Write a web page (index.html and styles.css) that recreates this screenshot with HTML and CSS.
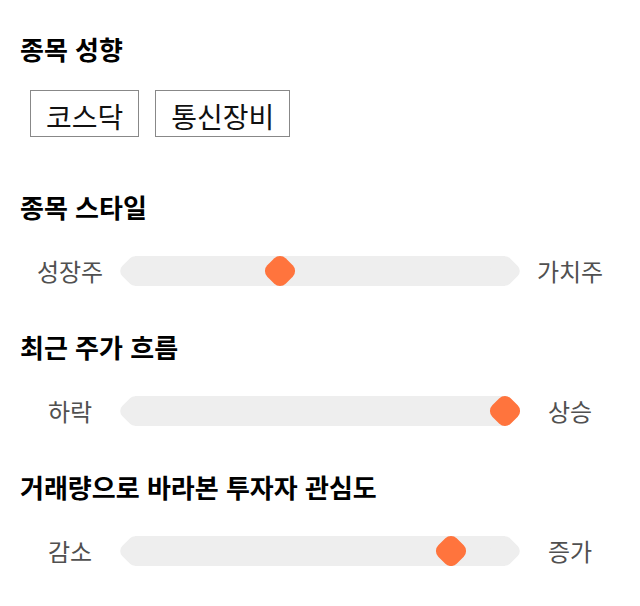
FILE: index.html
```html
<!DOCTYPE html>
<html lang="ko">
<head>
<meta charset="utf-8">
<link rel="stylesheet" href="styles.css">
</head>
<body>
<main class="panel">
  <section class="section section-tags">
    <h2 class="title">종목 성향</h2>
    <div class="tags">
      <span class="tag">코스닥</span>
      <span class="tag">통신장비</span>
    </div>
  </section>

  <section class="section">
    <h2 class="title">종목 스타일</h2>
    <div class="scale">
      <span class="label">성장주</span>
      <div class="track"><span class="thumb" style="--v:39.2"></span></div>
      <span class="label">가치주</span>
    </div>
  </section>

  <section class="section">
    <h2 class="title">최근 주가 흐름</h2>
    <div class="scale">
      <span class="label">하락</span>
      <div class="track"><span class="thumb" style="--v:100"></span></div>
      <span class="label">상승</span>
    </div>
  </section>

  <section class="section">
    <h2 class="title">거래량으로 바라본 투자자 관심도</h2>
    <div class="scale">
      <span class="label">감소</span>
      <div class="track"><span class="thumb" style="--v:85.4"></span></div>
      <span class="label">증가</span>
    </div>
  </section>
</main>
</body>
</html>
```

FILE: styles.css
```css
* { box-sizing: border-box; }

html, body {
  margin: 0;
  padding: 0;
  background: #fff;
}

body {
  font-family: "Noto Sans CJK KR", "Noto Sans", sans-serif;
  color: #000;
}

.panel {
  padding: 32px 20px 0 20px;
  display: flex;
  flex-direction: column;
}

.section + .section {
  margin-top: 44px;
}

.section-tags + .section {
  margin-top: 53px;
}

.title {
  margin: 0 0 32px 0;
  font-size: 26px;
  line-height: 34px;
  font-weight: 700;
  color: #000;
}

.section-tags .title {
  margin-bottom: 24px;
}

.tags {
  display: flex;
  gap: 16px;
  padding-left: 10px;
}

.tag {
  border: 1px solid #888;
  padding: 9px 15px 3px 15px;
  font-size: 28px;
  line-height: 33px;
  color: #111;
}

.scale {
  display: grid;
  grid-template-columns: 100px 400px 100px;
  align-items: center;
  height: 30px;
}

.label {
  text-align: center;
  font-size: 24px;
  line-height: 30px;
  color: #505050;
}

.track {
  position: relative;
  height: 30px;
  margin: 0 15px;
  background: #eeeeee;
}

.track::before,
.track::after {
  content: "";
  position: absolute;
  top: 50%;
  width: 25px;
  height: 25px;
  background: #eeeeee;
  border-radius: 7px;
  transform: translate(-50%, -50%) rotate(45deg);
}

.track::before { left: 0; }
.track::after { left: 100%; }

.thumb {
  position: absolute;
  top: 50%;
  left: calc(var(--v) * 1%);
  width: 26px;
  height: 26px;
  background: #ff743d;
  border-radius: 8px;
  transform: translate(-50%, -50%) rotate(45deg);
  z-index: 1;
}
```
